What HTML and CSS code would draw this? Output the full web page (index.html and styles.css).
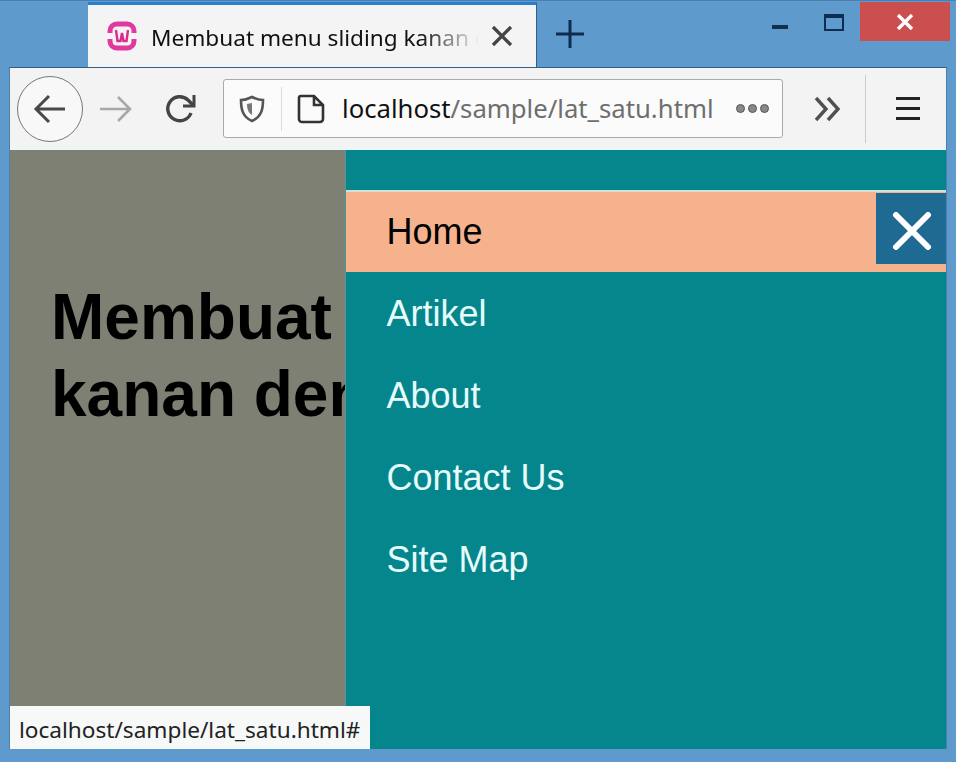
FILE: index.html
```html
<!DOCTYPE html>
<html>
<head>
    <meta charset="UTF-8">
    <title>Membuat menu sliding kanan</title>
    <link rel="stylesheet" href="styles.css">
</head>
<body>

    <div class="titlebar">
        <div class="tab">
            <svg class="favicon" width="32" height="30" viewBox="0 0 32 30">
                <path d="M4 12 V10 C4 6 7 3 11 3 H21 C25 3 28 6 28 10 V12 M4 18 V20 C4 24 7 27 11 27 H21 C25 27 28 24 28 20 V18" fill="none" stroke="#e0399f" stroke-width="5"/>
                <path d="M10 9 L11.5 20 H14.5 L16 12 L17.5 20 H20.5 L22 9" fill="none" stroke="#d92a92" stroke-width="2.4"/>
            </svg>
            <span class="tab-title">Membuat menu sliding kanan dengan</span>
            <svg class="tab-close" width="22" height="22" viewBox="0 0 22 22">
                <path d="M2 2 L20 20 M20 2 L2 20" stroke="#444" stroke-width="3.2"/>
            </svg>
        </div>
        <svg class="new-tab" width="28" height="28" viewBox="0 0 28 28">
            <path d="M14 0 V28 M0 14 H28" stroke="#0f2c4f" stroke-width="3"/>
        </svg>
        <div class="window-btns">
            <svg class="win-min" width="18" height="8" viewBox="0 0 18 8"><rect y="1" width="16" height="4" fill="#14304f"/></svg>
            <svg class="win-max" width="20" height="17" viewBox="0 0 20 17"><rect x="1" y="1" width="18" height="15" fill="none" stroke="#0f2c55" stroke-width="2"/><rect x="1" y="1" width="18" height="3" fill="#0f2c55"/></svg>
            <div class="win-close">
                <svg width="18" height="16" viewBox="0 0 18 16"><path d="M2 1 L16 15 M16 1 L2 15" stroke="#fff" stroke-width="3.4"/></svg>
            </div>
        </div>
    </div>

    <div class="window">
        <div class="toolbar">
            <div class="back-btn">
                <svg width="34" height="30" viewBox="0 0 34 30"><path d="M32 15 H3 M16 2 L3 15 L16 28" fill="none" stroke="#484848" stroke-width="3"/></svg>
            </div>
            <svg class="forward" width="34" height="28" viewBox="0 0 34 28"><path d="M1 14 H31 M19 2 L31 14 L19 26" fill="none" stroke="#a8a8a8" stroke-width="2.6"/></svg>
            <svg class="reload" width="32" height="30" viewBox="0 0 32 30"><path d="M26 19 A12 12 0 1 1 23 6 L28 11" fill="none" stroke="#444" stroke-width="3.4"/><path d="M29 1 V12 H18" fill="none" stroke="#444" stroke-width="3"/></svg>

            <div class="urlbar">
                <svg class="shield" width="26" height="28" viewBox="0 0 26 28">
                    <path d="M13 2 C17 4 20 5 24 5 C24 15 22 22 13 26 C4 22 2 15 2 5 C6 5 9 4 13 2 Z" fill="none" stroke="#555" stroke-width="2.6"/>
                    <path d="M13 8 V20 C9 18 8 13 8 9 Z" fill="#777"/>
                </svg>
                <div class="url-sep"></div>
                <svg class="page-icon" width="28" height="30" viewBox="0 0 28 30">
                    <path d="M4 2 H17 L26 11 V25 A3 3 0 0 1 23 28 H5 A3 3 0 0 1 2 25 V4 A2 2 0 0 1 4 2 Z M17 2 V11 H26" fill="none" stroke="#333" stroke-width="2.6"/>
                </svg>
                <div class="url-text"><span class="host">localhost</span>/sample/lat_satu.html</div>
                <div class="dots"><i></i><i></i><i></i></div>
            </div>

            <svg class="overflow" width="28" height="26" viewBox="0 0 28 26"><path d="M2 2 L12 13 L2 24 M14 2 L24 13 L14 24" fill="none" stroke="#505050" stroke-width="3.4"/></svg>
            <div class="tool-sep"></div>
            <div class="hamburger"><i></i><i></i><i></i></div>
        </div>

        <div class="content">
            <div class="page">
                <h1>Membuat menu sliding<br>kanan dengan CSS</h1>
            </div>
            <div class="sidenav">
                <ul class="menu">
                    <li class="active"><a href="#">Home</a></li>
                    <li><a href="#">Artikel</a></li>
                    <li><a href="#">About</a></li>
                    <li><a href="#">Contact Us</a></li>
                    <li><a href="#">Site Map</a></li>
                </ul>
                <a class="menu-close" href="#">
                    <svg width="40" height="38" viewBox="0 0 40 38"><path d="M4 3 L36 35 M36 3 L4 35" stroke="#fff" stroke-width="6" stroke-linecap="round"/></svg>
                </a>
            </div>
            <div class="status">localhost/sample/lat_satu.html#</div>
        </div>
    </div>

</body>
</html>
```

FILE: styles.css
```css
html, body {
    margin: 0;
    height: 100%;
}

body {
    width: 956px;
    height: 762px;
    overflow: hidden;
    background-color: #5f9acd;
    font-family: "Noto Sans", sans-serif;
    display: flex;
    flex-direction: column;
}

svg {
    display: block;
    flex: none;
}

/* title bar */
.titlebar {
    height: 67px;
    display: flex;
    align-items: stretch;
    padding-left: 88px;
    box-sizing: border-box;
    border-top: 1px solid #4a7fb2;
}

.tab {
    width: 449px;
    margin-top: 1px;
    border-top: 3px solid #2a7fd0;
    background-color: #f4f4f4;
    display: flex;
    align-items: center;
    padding-left: 18px;
    box-sizing: border-box;
    border-right: 1px solid #2f5f8c;
}

.tab-title {
    width: 328px;
    margin-left: 13px;
    padding-top: 3px;
    font-size: 22.6px;
    color: #111;
    white-space: nowrap;
    overflow: hidden;
    -webkit-mask-image: linear-gradient(to right, #000 82%, transparent 100%);
    mask-image: linear-gradient(to right, #000 82%, transparent 100%);
}

.tab-close {
    margin-left: 12px;
}

.new-tab {
    margin: 19px 0 0 19px;
}

.window-btns {
    margin-left: auto;
    display: flex;
    align-items: flex-start;
    margin-right: 6px;
}

.win-min {
    margin-top: 23px;
    margin-right: 34px;
}

.win-max {
    margin-top: 13px;
    margin-right: 16px;
}

.win-close {
    width: 90px;
    height: 39px;
    margin-top: 1px;
    background-color: #cb4f4f;
    display: flex;
    align-items: center;
    justify-content: center;
}

/* window */
.window {
    flex: 1;
    margin: 0 9px 13px 9px;
    border: 1px solid #4a80b0;
    border-top-color: #2f5f8c;
    border-bottom: none;
    display: flex;
    flex-direction: column;
    min-height: 0;
}

.toolbar {
    height: 81px;
    background-color: #f3f3f3;
    display: flex;
    align-items: center;
    box-sizing: border-box;
}

.back-btn {
    width: 66px;
    height: 66px;
    margin-left: 7px;
    border: 1px solid #777;
    border-radius: 50%;
    background-color: #f8f8f8;
    display: flex;
    align-items: center;
    justify-content: center;
    box-sizing: border-box;
}

.forward {
    margin-left: 16px;
}

.reload {
    margin-left: 32px;
}

.urlbar {
    width: 560px;
    height: 59px;
    margin-left: 26px;
    background-color: #fbfbfb;
    border: 1px solid #aaa;
    border-radius: 3px;
    display: flex;
    align-items: center;
    box-sizing: border-box;
}

.shield {
    margin-left: 15px;
}

.url-sep {
    width: 1px;
    height: 44px;
    margin-left: 16px;
    background-color: #ddd;
}

.page-icon {
    margin-left: 15px;
}

.url-text {
    margin-left: 17px;
    font-size: 25.7px;
    color: #6e6e6e;
    white-space: nowrap;
}

.host {
    color: #111;
}

.dots {
    margin-left: auto;
    margin-right: 13px;
    display: flex;
    gap: 3px;
}

.dots i {
    width: 7px;
    height: 7px;
    border-radius: 50%;
    border: 1px solid #555;
    background-color: #888;
}

.overflow {
    margin-left: 31px;
}

.tool-sep {
    width: 1px;
    height: 68px;
    margin-left: 23px;
    background-color: #ccc;
}

.hamburger {
    margin-left: 30px;
    width: 24px;
    display: flex;
    flex-direction: column;
    gap: 7px;
}

.hamburger i {
    height: 3px;
    background-color: #222;
}

/* page */
.content {
    position: relative;
    flex: 1;
    display: flex;
    min-height: 0;
    border-top: 1px solid #dff;
    box-sizing: border-box;
}

.page {
    width: 335px;
    overflow: hidden;
    background-color: #7e8073;
    padding: 129px 0 0 41px;
    box-sizing: border-box;
}

h1 {
    margin: 0;
    width: 900px;
    font-family: "Liberation Sans", sans-serif;
    font-size: 64px;
    line-height: 77px;
    font-weight: bold;
    color: #000;
}

.sidenav {
    position: relative;
    flex: 1;
    background-color: #05868c;
    padding-top: 40px;
    border-left: 1px solid #4e9a98;
}

.menu {
    list-style: none;
    margin: 0;
    padding: 0;
}

.menu li {
    height: 82px;
    display: flex;
    align-items: center;
    padding: 2px 0 0 40.5px;
    box-sizing: border-box;
}

.menu a {
    font-family: "Liberation Sans", sans-serif;
    font-size: 36px;
    color: #e6fbfb;
    text-decoration: none;
}

.menu li.active {
    background-color: #f6b28d;
    border-top: 2px solid #cfe3d6;
    padding-top: 0;
}

.menu li.active a {
    color: #000;
}

.menu-close {
    position: absolute;
    top: 43px;
    right: 0;
    width: 70px;
    height: 71px;
    padding: 4px 0 0 2px;
    background-color: #1e6a92;
    display: flex;
    align-items: center;
    justify-content: center;
    box-sizing: border-box;
}

.status {
    position: absolute;
    left: 0;
    bottom: 0;
    width: 360px;
    height: 43px;
    background-color: #f7f9f9;
    font-size: 22.6px;
    line-height: 47px;
    color: #222;
    padding-left: 9px;
    box-sizing: border-box;
    white-space: nowrap;
}
```
